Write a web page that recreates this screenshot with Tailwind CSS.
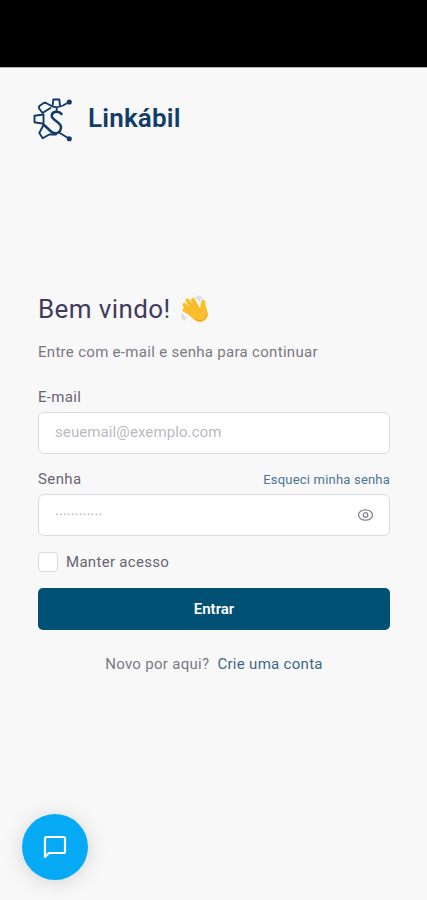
<!DOCTYPE html>
<html lang="pt-BR">
<head>
  <meta charset="UTF-8" />
  <meta name="viewport" content="width=device-width, initial-scale=1.0"/>
  <title>Linkábil</title>
  <script src="https://cdn.jsdelivr.net/npm/@tailwindcss/browser@4"></script>
</head>
<body class="h-[900px] overflow-hidden bg-[#f8f8f8] font-[Roboto,sans-serif] text-[#7b7883]">
  <div class="h-[68px] bg-black border-b border-[#b5b5b5]"></div>

  <header class="flex items-center h-[104px] pl-8 gap-3.5">
    <svg class="w-[42px] h-[46px] shrink-0" viewBox="0 0 42 46" fill="none" stroke="#123a66" stroke-width="1.900" stroke-linejoin="round" stroke-linecap="round">
      <path d="M37.300 5L31 8.500Q24 11.500 19.500 9L15 6.500Q13 5 11 6.500L8 8.500Q6 10 7.500 12L10.500 16L18.500 11" />
      <path d="M20.700 8L21.300 2.500H27.300L28 8.500" />
      <path d="M11.500 17.500L2.500 18.700V25.300L11.500 26.800V17.500" />
      <path d="M11.500 28L7.300 36L10.700 41.300L17.300 37.500H24" />
      <path d="M29.500 17C27 13.500 20 14 19.700 18.700C19.700 23 29 25 29 30C29 36 23 38 19 34.500L12 28" stroke-width="2.500" />
      <path d="M24.700 11.500V14.500M27 35.500L37.300 41.700" />
      <circle cx="37.300" cy="5" r="1.600" fill="#123a66" />
      <circle cx="37.300" cy="41.700" r="1.600" fill="#123a66" />
    </svg>
    <span class="text-[26px] leading-8 font-semibold tracking-[0.2px] text-[#123c69] -mt-1">Linkábil</span>
  </header>

  <main class="pl-[38px] pr-[37px] pt-[121px]">
    <h1 class="flex items-center gap-2.5 h-8 text-[26px] tracking-[0.4px] text-[#43395f]">
      Bem vindo!
      <svg class="w-[28px] h-[28px]" viewBox="0 0 28 28" fill="none" stroke-linecap="round">
        <path d="M15 2.500Q18 3 19 6M17 1Q20 2 21 4M1 19Q2 22 5 23M1 22Q2 24 4 25" stroke="#d0d3d6" stroke-width="1.300" />
        <path d="M15 22L3.500 15M14 20L3.500 10M16 18L6.500 5.500M18 16L12 5" stroke="#fbbf2c" stroke-width="4.200" />
        <path d="M9 9L19 14C20 10 19 5 22.500 4.500C25 5 24 9 25 12C27 17 28 21 24 25C19 29 14 26 10 22L6 17Z" fill="#fbbf2c" />
        <path d="M5 12L11 18M8 8L14 15M12 7L17 13M19 14Q16 16 17 19" stroke="#eda62a" stroke-width="0.700" />
        <path d="M26 19C26 25 20 28 14 24" stroke="#eda41d" stroke-width="1" />
      </svg>
    </h1>
    <p class="mt-[17px] text-[15px] leading-5 tracking-[0.3px]">Entre com e-mail e senha para continuar</p>

    <form>
      <label for="email" class="block mt-[25px] text-[15px] leading-5 tracking-[0.3px] text-[#686474]">E-mail</label>
      <input id="email" type="text" placeholder="seuemail@exemplo.com" class="block w-full h-[42px] mt-[5px] px-4 pb-0.5 rounded-md border border-[#dbdade] bg-white text-[15px] tracking-[0.1px] placeholder:text-[#bbb9c1]" />

      <div class="flex items-center justify-between mt-[15px] h-5">
        <label for="senha" class="text-[15px] tracking-[0.4px] text-[#686474]">Senha</label>
        <a href="#" class="mt-0.5 text-[13px] tracking-[0.2px] text-[#4b7693]">Esqueci minha senha</a>
      </div>
      <div class="flex items-center justify-between h-[42px] mt-[5px] px-4 rounded-md border border-[#dbdade] bg-white">
        <input id="senha" type="text" placeholder="············" class="w-40 text-sm tracking-[0.3px] placeholder:text-[#aaa8b1]" />
        <svg class="w-4 h-4" viewBox="0 0 16 16" fill="none" stroke="#85828c" stroke-width="1.300">
          <ellipse cx="8.500" cy="8" rx="7" ry="5.200" />
          <circle cx="8.500" cy="8" r="2.300" />
        </svg>
      </div>

      <label class="flex items-center mt-4 h-5 gap-2 text-[15px] tracking-[0.3px] text-[#686474]">
        <span class="w-5 h-5 rounded border border-[#dbdade] bg-white"></span>
        Manter acesso
      </label>

      <button type="button" class="block w-full h-[42px] mt-4 rounded-[5px] bg-[#005174] text-[15px] font-semibold text-white">Entrar</button>
    </form>

    <p class="flex justify-center gap-2 mt-6 text-[15px] leading-5 tracking-[0.3px]">
      <span>Novo por aqui?</span>
      <a href="#" class="text-[#3a6887]">Crie uma conta</a>
    </p>
  </main>

  <button type="button" class="fixed left-[22px] top-[814px] flex items-center justify-center w-[66px] h-[66px] rounded-full bg-[#06a9f4] shadow-[0_2px_20px_rgba(0,0,0,0.15)]">
    <svg class="w-6 h-6" viewBox="0 0 24 24" fill="none" stroke="#fff" stroke-width="2.200" stroke-linejoin="round">
      <path d="M2 22V3.500Q2 2 3.500 2H20.500Q22 2 22 3.500V16.500Q22 18 20.500 18H6Z" />
    </svg>
  </button>
</body>
</html>
